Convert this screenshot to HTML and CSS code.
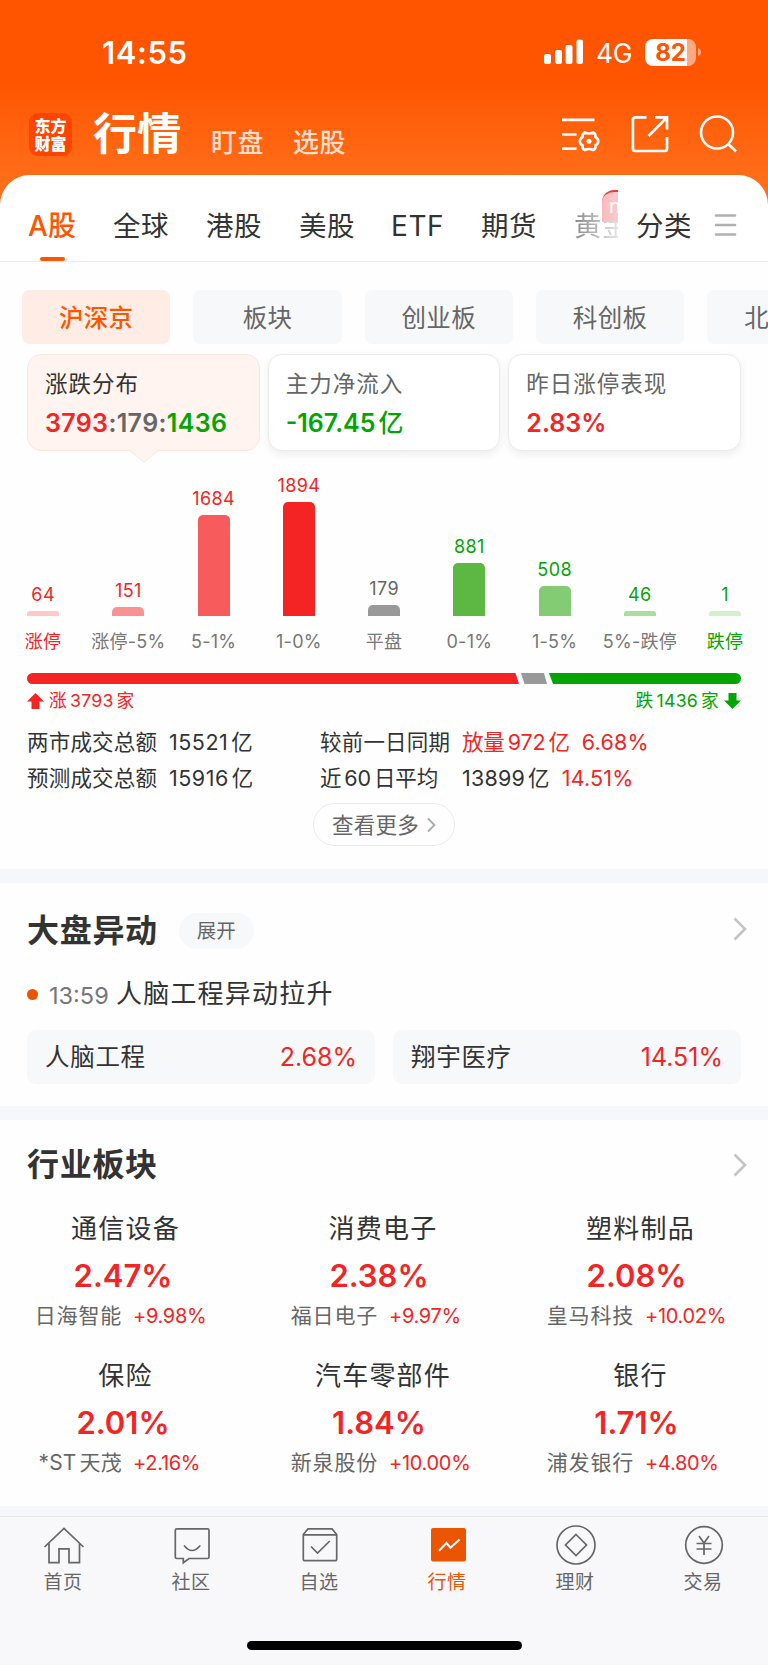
FILE: index.html
```html
<!DOCTYPE html>
<html lang="zh-CN">
<head>
<meta charset="utf-8">
<title>行情</title>
<link rel="stylesheet" href="styles.css">
</head>
<body>
<div class="app">
  <header class="top">
    <div class="status">
      <span class="clock">14:55</span>
      <div class="status-right">
        <svg class="signal" width="40" height="26" viewBox="0 0 40 26" fill="#fff"><rect x="0" y="15" width="7" height="10" rx="2"/><rect x="11" y="11" width="7" height="14" rx="2"/><rect x="21.500" y="6" width="7" height="19" rx="2"/><rect x="32.500" y="0.500" width="6.500" height="24.500" rx="2"/></svg>
        <span class="net">4G</span>
        <span class="battery"><span class="battery-num">82</span></span>
        <svg class="battery-cap" width="4" height="10" viewBox="0 0 4 10"><path d="M0 1Q3 2 3 5T0 9Z" fill="#ffaa80"/></svg>
      </div>
    </div>
    <div class="nav">
      <div class="logo"><span>东方</span><span>财富</span></div>
      <h1 class="nav-title">行情</h1>
      <span class="nav-link">盯盘</span>
      <span class="nav-link">选股</span>
      <div class="nav-icons">
        <svg width="40" height="38" viewBox="0 0 40 38" fill="none" stroke="#fff" stroke-width="2.700"><path d="M1 4.800H33.500M1 19.500H15.500M1 33.700H15.500"/><path stroke-width="2.600" d="M23.800 17.500Q28 19.500 32.200 17.500Q34.800 18.600 34.500 22Q37.200 23.500 37.200 26.300Q37.200 29 34.500 30.500Q34.800 34 32.200 35Q28 33 23.800 35Q21.200 34 21.500 30.500Q18.800 29 18.800 26.300Q18.800 23.500 21.500 22Q21.200 18.600 23.800 17.500Z"/><circle cx="28" cy="26.300" r="2.500" fill="#fff" stroke="none"/></svg>
        <svg width="38" height="38" viewBox="0 0 38 38" fill="none" stroke="#fff" stroke-width="2.700"><path d="M15.500 2.400H4.500Q1.900 2.400 1.900 5V33.500Q1.900 36 4.500 36H33.500Q36 36 36 33.500V22M24 2.400H36V14.500M36 2.400L17.500 21"/></svg>
        <svg width="38" height="38" viewBox="0 0 38 38" fill="none" stroke="#fff" stroke-width="2.600"><circle cx="18" cy="17.500" r="16"/><path d="M29.300 29L37 36.500"/></svg>
      </div>
    </div>
  </header>

  <nav class="tabs">
    <span class="tab tab-on">A股</span><span class="tab">全球</span><span class="tab">港股</span><span class="tab">美股</span><span class="tab tab-etf">ETF</span><span class="tab">期货</span>
    <span class="tab tab-fade">黄金<i class="new">n</i></span>
    <span class="tab">分类</span>
    <svg class="menu" width="23" height="24" viewBox="0 0 23 24" stroke="#b0b0b0" stroke-width="2.600" stroke-linecap="round"><path d="M2 2.500H21M2 12H21M2 21.500H21"/></svg>
  </nav>

  <div class="chips">
    <span class="chip chip-on">沪深京</span><span class="chip">板块</span><span class="chip">创业板</span><span class="chip">科创板</span><span class="chip">北交所</span>
  </div>

  <section class="cards">
    <div class="card card-on"><span class="card-name">涨跌分布</span><span class="card-val"><b class="up">3793</b><b class="flat">:179:</b><b class="down">1436</b></span>
      <svg class="card-tip" width="28" height="13" viewBox="0 0 28 13"><path d="M0 0H28L27 1.300L15.500 11Q14 12.300 12.500 11L1 1.300Z" fill="#fff4ef"/><path d="M0 0.800L12.500 11Q14 12.300 15.500 11L28 0.800" fill="none" stroke="#ffe6da"/></svg></div>
    <div class="card"><span class="card-name">主力净流入</span><span class="card-val down">-167.45<em>亿</em></span></div>
    <div class="card"><span class="card-name">昨日涨停表现</span><span class="card-val up">2.83%</span></div>
  </section>

  <section class="chart">
    <div class="col up"><span class="num">64</span><i class="bar b1"></i><span class="lab">涨停</span></div>
    <div class="col up"><span class="num">151</span><i class="bar b2"></i><span class="lab grey">涨停-5%</span></div>
    <div class="col up"><span class="num">1684</span><i class="bar b3"></i><span class="lab grey">5-1%</span></div>
    <div class="col up"><span class="num">1894</span><i class="bar b4"></i><span class="lab grey">1-0%</span></div>
    <div class="col flat"><span class="num">179</span><i class="bar b5"></i><span class="lab grey">平盘</span></div>
    <div class="col down"><span class="num">881</span><i class="bar b6"></i><span class="lab grey">0-1%</span></div>
    <div class="col down"><span class="num">508</span><i class="bar b7"></i><span class="lab grey">1-5%</span></div>
    <div class="col down"><span class="num">46</span><i class="bar b8"></i><span class="lab grey">5%-跌停</span></div>
    <div class="col down"><span class="num">1</span><i class="bar b9"></i><span class="lab">跌停</span></div>
  </section>

  <svg class="ratio" width="714" height="11" viewBox="0 0 714 11"><path d="M5.500 0H488.500L492 11H5.500A5.500 5.500 0 0 1 5.500 0Z" fill="#f42424"/><path d="M494 0H517L520 11H497.500Z" fill="#999"/><path d="M522 0H708.500A5.500 5.500 0 0 1 708.500 11H526Z" fill="#04a404"/></svg>
  <div class="ratio-text">
    <span class="rt up"><svg width="17" height="16" viewBox="0 0 17 16"><path d="M8.500 0L17 8.500H12.500V16H4.500V8.500H0Z" fill="#f42424"/></svg><span>涨<s></s>3793<s></s>家</span></span>
    <span class="rt down"><span>跌<s></s>1436<s></s>家</span><svg width="17" height="16" viewBox="0 0 17 16"><path d="M8.500 16L17 7.500H12.500V0H4.500V7.500H0Z" fill="#04a404"/></svg></span>
  </div>

  <section class="stats">
    <span>两市成交总额</span><span class="wide">15521<s></s>亿</span><span>较前一日同期</span><span class="pair"><span class="up tight">放量<s></s>972<s></s>亿</span><span class="up">6.68%</span></span>
    <span>预测成交总额</span><span class="wide">15916<s></s>亿</span><span class="tight">近<s></s>60<s></s>日平均</span><span class="pair"><span>13899<s></s>亿</span><span class="up">14.51%</span></span>
  </section>
  <div class="more"><span class="more-btn">查看更多<svg width="9" height="16" viewBox="0 0 9 16" fill="none" stroke="#aaa" stroke-width="1.800"><path d="M1 1.500L7.500 8L1 14.500"/></svg></span></div>

  <div class="band"></div>

  <section class="moves">
    <div class="head"><h2>大盘异动</h2><span class="pill">展开</span><svg class="go go-up" width="14" height="24" viewBox="0 0 14 24" fill="none" stroke="#c4c4c4" stroke-width="2.600"><path d="M1.500 1.500L12 12L1.500 22.500"/></svg></div>
    <div class="event"><i class="dot"></i><span class="time">13:59</span><span class="what">人脑工程异动拉升</span></div>
    <div class="picks">
      <div class="pick"><span class="pick-name">人脑工程</span><span class="up">2.68%</span></div>
      <div class="pick"><span class="pick-name">翔宇医疗</span><span class="up">14.51%</span></div>
    </div>
  </section>

  <div class="band"></div>

  <section class="sectors">
    <div class="head"><h2>行业板块</h2><svg class="go" width="14" height="24" viewBox="0 0 14 24" fill="none" stroke="#c4c4c4" stroke-width="2.600"><path d="M1.500 1.500L12 12L1.500 22.500"/></svg></div>
    <div class="grid">
      <div class="cell"><span class="sec">通信设备</span><b class="pct">2.47%</b><div class="lead"><span>日海智能</span><em>+9.98%</em></div></div>
      <div class="cell"><span class="sec">消费电子</span><b class="pct">2.38%</b><div class="lead"><span>福日电子</span><em>+9.97%</em></div></div>
      <div class="cell"><span class="sec">塑料制品</span><b class="pct">2.08%</b><div class="lead"><span>皇马科技</span><em>+10.02%</em></div></div>
      <div class="cell"><span class="sec">保险</span><b class="pct">2.01%</b><div class="lead"><span class="st">*ST<s></s>天茂</span><em>+2.16%</em></div></div>
      <div class="cell"><span class="sec">汽车零部件</span><b class="pct">1.84%</b><div class="lead"><span>新泉股份</span><em>+10.00%</em></div></div>
      <div class="cell"><span class="sec">银行</span><b class="pct">1.71%</b><div class="lead"><span>浦发银行</span><em>+4.80%</em></div></div>
    </div>
  </section>

  <footer class="dock">
    <div class="dock-items">
      <div class="item"><svg width="42" height="42" viewBox="0 0 42 42" fill="none" stroke="#666" stroke-width="1.700"><path d="M1.500 22L21 3.500L40.500 22M6 18.500V37.700H16V23.800H26V37.700H36.500V18.500"/></svg><span>首页</span></div>
      <div class="item"><svg width="42" height="42" viewBox="0 0 42 42" fill="none" stroke="#666" stroke-width="1.700"><path d="M6 3.800H36.500Q38 3.800 38 5.300V32Q38 33.500 36.500 33.500H18L12.300 37.700V33.500H6Q4.300 33.500 4.300 32V5.300Q4.300 3.800 6 3.800Z"/><path d="M13.500 21Q21 30 28.800 21" stroke-linecap="round"/></svg><span>社区</span></div>
      <div class="item"><svg width="42" height="42" viewBox="0 0 42 42" fill="none" stroke="#666" stroke-width="1.700"><path d="M4.300 9.500L9 3.800H33L37.700 9.500V34Q37.700 35.700 36 35.700H6Q4.300 35.700 4.300 34ZM4.300 9.800H37.700M12 21.500L18.500 28L30.800 16"/></svg><span>自选</span></div>
      <div class="item item-on"><svg width="42" height="42" viewBox="0 0 42 42" fill="none"><rect x="4" y="3" width="35" height="33.500" rx="2" fill="#ec5500"/><path d="M12 25.700L19.500 18L23.500 22.700L32.500 14.500" stroke="#fff" stroke-width="2"/></svg><span>行情</span></div>
      <div class="item"><svg width="42" height="42" viewBox="0 0 42 42" fill="none" stroke="#666" stroke-width="1.700"><circle cx="21" cy="20" r="19"/><path d="M21 9.500L31.500 20L21 30.500L10.500 20Z"/></svg><span>理财</span></div>
      <div class="item"><svg width="42" height="42" viewBox="0 0 42 42" fill="none" stroke="#666" stroke-width="1.700"><circle cx="21" cy="20" r="18.300"/><path d="M16 11L21 18L26 11M13.500 18.500H28.500M13.500 24H28.500M21 18V30"/></svg><span>交易</span></div>
    </div>
    <i class="home-bar"></i>
  </footer>
</div>
</body>
</html>
```
FILE: styles.css
```css
* { box-sizing: border-box; }
body { margin: 0; background: #fefefe; color: #333; font-family: Inter, "Noto Sans CJK SC", sans-serif; }
i, em { font-style: normal; }
s { display: inline-block; width: 3px; text-decoration: none; }
.app { width: 768px; height: 1665px; overflow: hidden; display: flex; flex-direction: column; }
.up { color: #f42424; }
.down { color: #04a404; }
.flat { color: #666; }

.top { height: 215px; margin-bottom: -40px; flex: none; background: linear-gradient(#ff5500 80px, #ff6e1a 180px); color: #fff; }
.status { height: 104px; padding: 0 66px 0 102px; display: flex; align-items: center; justify-content: space-between; }
.clock { font-size: 31px; line-height: 40px; font-weight: 600; padding-top: 2px; letter-spacing: 0.600px; }
.status-right { display: flex; align-items: center; }
.net { font-size: 26.500px; line-height: 30px; margin: 2px 13px 0 12px; letter-spacing: -0.500px; }
.battery { width: 51px; height: 27px; border-radius: 8px; background: linear-gradient(90deg, #fff 42px, #ffaa80 42px); display: flex; justify-content: center; align-items: center; }
.battery-num { color: #ff5500; font-size: 24px; line-height: 27px; font-weight: 700; }
.battery-cap { margin-left: 2px; }

.nav { height: 71px; padding: 0 31px 0 29px; display: flex; align-items: flex-start; }
.logo { width: 43px; height: 43px; margin: 9px 21px 0 0; border-radius: 9px; background: #ff4400; display: flex; flex-direction: column; align-items: center; justify-content: center; font-size: 16px; line-height: 18px; font-weight: 900; }
.nav-title { margin: 0; font-size: 44px; line-height: 60px; font-weight: 600; width: 118px; letter-spacing: 0.300px; }
.nav-link { font-size: 26px; line-height: 40px; margin-top: 19px; letter-spacing: 0.600px; font-weight: 500; width: 82px; color: #ffdecb; }
.nav-icons { display: flex; gap: 30px; margin: 11px 0 0 auto; }

.tabs { height: 87px; flex: none; border-radius: 30px 30px 0 0; background: #fff; border-bottom: 1px solid #ededed; display: grid; grid-template-columns: 85px 93px 93px 91px 91px 93px 62px 78px 23px; padding-left: 28px; align-items: center; position: relative; }
.tab { font-size: 27.500px; line-height: 86px; height: 86px; letter-spacing: 0.600px; margin-top: 8px; white-space: nowrap; }
.tab-etf { font-size: 28px; padding-left: 1px; }
.tab-on { color: #ff5500; font-weight: 500; position: relative; font-size: 28px; letter-spacing: 0.200px; }
.tab-on::after { content: ""; position: absolute; left: 12px; bottom: 8px; width: 25px; height: 4px; border-radius: 2px; background: #ff5500; }
.tab-fade { position: relative; width: 44px; overflow: hidden; color: transparent; background: linear-gradient(90deg, #888, #e6e6e6); -webkit-background-clip: text; background-clip: text; }
.new { position: absolute; left: 28px; top: 7px; width: 30px; height: 32px; border-radius: 12px 0 0 0; background: linear-gradient(90deg, #f8babd, #fbdcdc); border-top: 2px solid #f13a3a; color: #fff; font-size: 20px; line-height: 28px; padding-left: 7px; }
.menu { margin-top: 6px; }

.chips { height: 82px; flex: none; padding: 28px 0 0 22px; display: flex; gap: 23px; overflow: hidden; }
.chip { width: 148.300px; height: 54px; flex: none; border-radius: 7px; background: #f7f8fa; color: #666; font-size: 24.500px; line-height: 56px; text-align: center; letter-spacing: 0.300px; }
.chip-on { background: #ffede5; color: #ff5500; font-weight: 500; }

.cards { padding: 10px 27px 0; flex: none; display: grid; grid-template-columns: repeat(3, 1fr); gap: 8px; height: 107px; }
.card { position: relative; border: 1px solid #ebebeb; border-radius: 14px; background: #fff; box-shadow: 0 3px 8px rgba(0,0,0,.07); height: 97px; padding: 13px 17px; display: flex; flex-direction: column; }
.card-on { background: #fff4ef; border-color: #ffe6da; box-shadow: none; }
.card-name { font-size: 22.500px; line-height: 32px; letter-spacing: 1px; color: #666; }
.card-on .card-name { color: #333; }
.card-val { font-size: 25px; line-height: 32px; margin-top: 7px; font-weight: 600; }
.card-val b { font-weight: 600; letter-spacing: 0.350px; }
.card-val em { font-weight: 500; margin-left: 3px; }
.card-tip { position: absolute; left: 102px; top: 94.500px; }

.chart { flex: none; height: 222px; display: flex; padding-left: 0.500px; }
.col { width: 85.250px; flex: none; display: flex; flex-direction: column; align-items: center; justify-content: flex-end; }
.num { font-size: 18px; line-height: 20px; letter-spacing: 0.400px; margin-bottom: 6px; }
.bar { width: 32px; border-radius: 5px 5px 0 0; }
.b1 { height: 5.500px; background: #fcc8c8; border-radius: 3px 3px 0 0; }
.b2 { height: 9px; background: #f99393; }
.b3 { height: 101.500px; background: #f85b5b; }
.b4 { height: 114.500px; background: #f42424; }
.b5 { height: 11px; background: #999; }
.b6 { height: 53px; background: #5cb842; }
.b7 { height: 30.500px; background: #84cc74; }
.b8 { height: 5.500px; background: #abdca0; border-radius: 3px 3px 0 0; }
.b9 { height: 5.500px; background: #d4eed0; border-radius: 3px 3px 0 0; }
.lab { font-size: 18px; line-height: 22px; margin: 15px 0 20px; white-space: nowrap; letter-spacing: 0.300px; }
.grey { color: #777; }

.ratio { margin: 0 27px; flex: none; }
.ratio-text { height: 36px; flex: none; padding: 5px 27px 0; display: flex; justify-content: space-between; font-size: 17.700px; line-height: 24px; }
.rt { display: flex; align-items: center; gap: 5px; height: 24px; letter-spacing: 0.250px; }

.stats { flex: none; padding-left: 27px; height: 76px; display: grid; grid-template-columns: 142px 151px 142px 300px; grid-auto-rows: 36px; font-size: 21.500px; line-height: 44px; letter-spacing: 0.200px; white-space: nowrap; }
.wide { letter-spacing: 0.500px; }
.tight { letter-spacing: -0.150px; }
.pair { display: flex; gap: 12px; }
.more { flex: none; height: 73px; padding-top: 7px; display: flex; justify-content: center; }
.more-btn { width: 142px; height: 43px; border: 1.500px solid #ebebeb; border-radius: 22px; display: flex; align-items: center; justify-content: center; gap: 8px; font-size: 21.500px; line-height: 40px; letter-spacing: 0.300px; color: #666; }

.band { height: 14px; flex: none; background: #f6f7fa; }
.head { display: flex; align-items: center; padding: 0 21px 0 27px; }
.head h2 { margin: 0; font-size: 32px; line-height: 48px; font-weight: 600; letter-spacing: 0.700px; }
.go { margin-left: auto; }
.go-up { margin-bottom: 4px; }
.pill { width: 75px; height: 36px; margin-left: 21px; border-radius: 18px; background: #f7f8fa; color: #666; font-size: 19.500px; line-height: 36px; text-align: center; }
.moves { height: 223px; flex: none; padding-top: 24px; }
.event { display: flex; align-items: center; padding: 0 27px; height: 50px; margin-top: 14px; }
.dot { width: 11px; height: 11px; border-radius: 50%; background: #ec5500; margin-right: 11px; }
.time { font-size: 23.500px; color: #777; width: 67px; padding-top: 2px; }
.what { font-size: 26px; line-height: 40px; letter-spacing: 1.200px; }
.picks { display: grid; grid-template-columns: 1fr 1fr; gap: 18px; padding: 0 27px; margin-top: 11px; }
.pick { height: 54px; padding: 0 18px 0 18px; border-radius: 9px; background: #f7f8fa; display: flex; align-items: center; justify-content: space-between; font-size: 25px; line-height: 40px; }
.pick-name { font-size: 24.500px; letter-spacing: 0.700px; }

.sectors { height: 386px; flex: none; padding-top: 21px; }
.sectors .head { height: 48px; }
.grid { display: grid; grid-template-columns: repeat(3, 256px); grid-auto-rows: 146.500px; padding-top: 20px; }
.cell { display: flex; flex-direction: column; align-items: center; }
.sec { font-size: 26px; line-height: 40px; letter-spacing: 1.200px; margin-right: 5px; }
.pct { font-size: 31px; line-height: 40px; margin: 7px 10px 0 0; font-weight: 600; color: #f42424; }
.cell:nth-child(3n+2) .sec { margin-right: 2px; }
.cell:nth-child(3n) .sec { margin-right: 0; margin-left: 1px; }
.cell:nth-child(3n) .pct { margin-right: 7px; }
.lead { width: 256px; display: grid; grid-template-columns: 122px 1fr; gap: 11px; font-size: 21px; line-height: 30px; margin-top: 5px; color: #666; letter-spacing: 0.800px; }
.lead span { text-align: right; }
.lead .st { letter-spacing: 0.200px; }
.lead em { color: #f42424; font-size: 20px; letter-spacing: -0.300px; }

.dock { flex: 1; background: #f8f8fb; border-top: 10px solid #f6f7fa; display: flex; flex-direction: column; align-items: center; }
.dock-items { width: 768px; height: 125px; border-top: 1px solid #e8e8e8; display: grid; grid-template-columns: repeat(6, 1fr); padding-top: 8px; }
.item { display: flex; flex-direction: column; align-items: center; color: #666; }
.item span { font-size: 19px; line-height: 28px; margin: 2px 2px 0 0; letter-spacing: 0.500px; }
.item-on span { color: #ec5500; }
.home-bar { width: 275px; height: 9px; border-radius: 5px; background: #000; }
```
